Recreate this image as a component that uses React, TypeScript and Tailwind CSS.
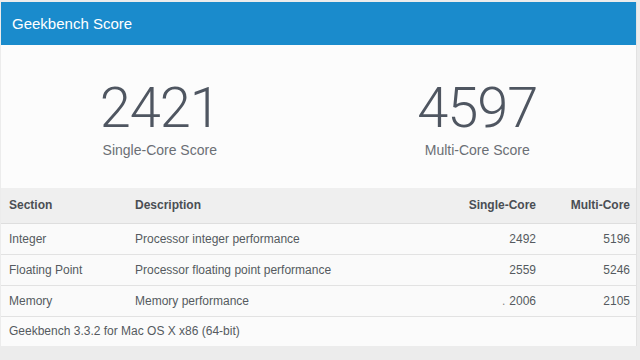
const rows = [
  { section: "Integer", description: "Processor integer performance", single: "2492", multi: "5196" },
  { section: "Floating Point", description: "Processor floating point performance", single: "2559", multi: "5246" },
  { section: "Memory", description: "Memory performance", single: "2006", multi: "2105" },
];

const ScoreBox = ({ score, label }: { score: string; label: string }) => (
  <div className="flex-1 flex flex-col items-center">
    <div className="text-[56px] leading-[56px] font-light text-[#4f5661] tracking-[-1px]" style={{ fontFamily: "Roboto, 'Liberation Sans', sans-serif" }}>
      {score}
    </div>
    <div className="mt-[4px] text-[14px] text-[#6b6f75]">{label}</div>
  </div>
);

export default function App() {
  return (
    <div className="w-[640px] h-[360px] bg-[#ececec] pt-[2px] pl-[1px] overflow-hidden" style={{ fontFamily: "'Liberation Sans', Arial, sans-serif" }}>
      <div className="w-[636px] bg-[#fcfcfc] border-r border-[#e2e2e2]">
        <div className="h-[43px] bg-[#1a8bcc] flex items-center px-[11px] pt-[2px]">
          <span className="text-white text-[15px]">Geekbench Score</span>
        </div>

        <div className="h-[143px] flex pt-[35px]">
          <ScoreBox score="2421" label="Single-Core Score" />
          <ScoreBox score="4597" label="Multi-Core Score" />
        </div>

        <table className="w-full text-[12px] text-[#555a60] border-collapse">
          <thead>
            <tr className="h-[35px] bg-[#efefef] border-b border-[#dedede]">
              <th className="text-left font-bold pl-[8px] w-[134px] text-[#4a4e54]">Section</th>
              <th className="text-left font-bold text-[#4a4e54]">Description</th>
              <th className="text-right font-bold w-[110px] text-[#4a4e54]">Single-Core</th>
              <th className="text-right font-bold pr-[6px] w-[100px] text-[#4a4e54]">Multi-Core</th>
            </tr>
          </thead>
          <tbody>
            {rows.map((r) => (
              <tr key={r.section} className="h-[31px] border-b border-[#e2e2e2] bg-[#fafafa]">
                <td className="pl-[8px]">{r.section}</td>
                <td>{r.description}</td>
                <td className="text-right">
                  {r.section === "Memory" && <span className="mr-[4px] text-[#888]">.</span>}
                  {r.single}
                </td>
                <td className="text-right pr-[6px]">{r.multi}</td>
              </tr>
            ))}
            <tr className="h-[30px] bg-[#fbfbfb]">
              <td colSpan={4} className="pl-[8px]">Geekbench 3.3.2 for Mac OS X x86 (64-bit)</td>
            </tr>
          </tbody>
        </table>
      </div>
    </div>
  );
}
